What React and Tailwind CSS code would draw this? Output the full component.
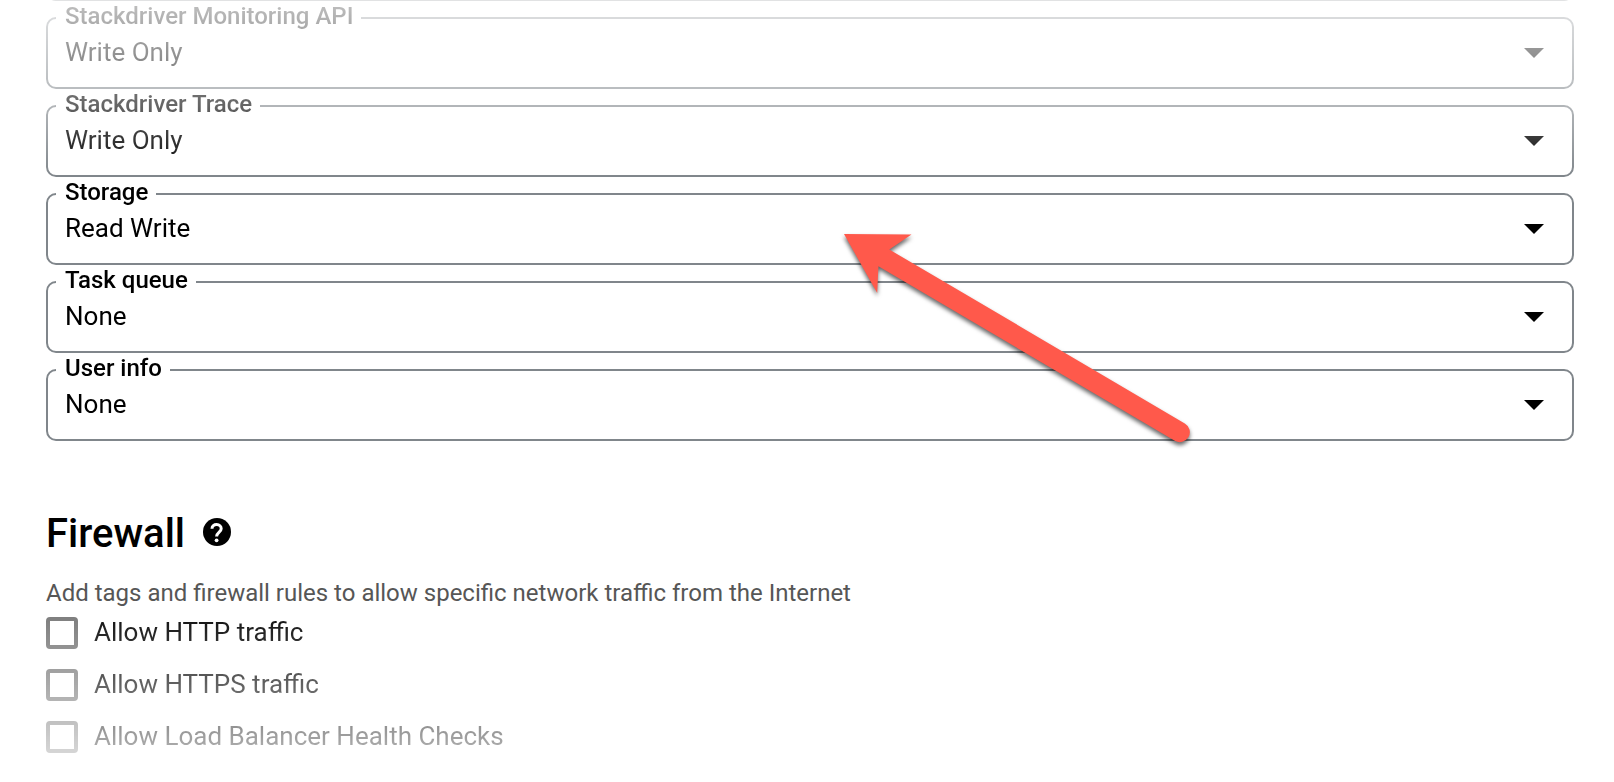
import React from "react";

const scopes = [
  { id: "monitoring", label: "Stackdriver Monitoring API", value: "Write Only" },
  { id: "trace", label: "Stackdriver Trace", value: "Write Only" },
  { id: "storage", label: "Storage", value: "Read Write" },
  { id: "task-queue", label: "Task queue", value: "None" },
  { id: "user-info", label: "User info", value: "None" },
];

const rules = [
  { id: "http", label: "Allow HTTP traffic" },
  { id: "https", label: "Allow HTTPS traffic" },
  { id: "health", label: "Allow Load Balancer Health Checks" },
];

function ScopeField({ id, label, value }) {
  return (
    <fieldset className="min-w-0 rounded-[10px] border-2 border-[#80868b]">
      <legend className="ml-2 h-6 pr-2 pl-[9px] text-[24px] leading-5 font-medium">
        <label htmlFor={id}>{label}</label>
      </legend>
      <div className="relative -mt-[11px] flex h-[68px] items-center">
        <select
          id={id}
          defaultValue={value}
          className="h-full w-full appearance-none bg-transparent px-[17px] pb-[2px] text-[26px] leading-8 text-black"
        >
          <option>{value}</option>
        </select>
        <svg
          aria-hidden="true"
          viewBox="0 0 20 10"
          className="pointer-events-none absolute right-7 h-[10px] w-5"
        >
          <path d="M0 0H20L10 10Z" fill="currentColor" />
        </svg>
      </div>
    </fieldset>
  );
}

function Arrow() {
  return (
    <svg
      aria-hidden="true"
      viewBox="834 224 370 230"
      className="pointer-events-none absolute top-[224px] left-[834px] h-[230px] w-[370px] drop-shadow-[0_3px_2px_rgba(0,0,0,0.6)]"
    >
      <path
        d="M844 234L911.5 234.6L889.3 249.5L1184.8 423.4A10 10 0 0 1 1174.8 440.8L878.4 266.2L877.2 293Z"
        fill="#ff594b"
      />
    </svg>
  );
}

function HelpIcon() {
  return (
    <svg viewBox="0 0 28 28" className="size-7" aria-hidden="true">
      <circle cx="14" cy="14" r="14" fill="black" />
      <path
        d="M9 10.8C9 8.2 11 6.6 13.7 6.6S18.2 8.3 18.2 10.7C18.2 14 13.6 14.2 13.6 18.6"
        fill="none"
        stroke="white"
        strokeWidth="3"
      />
      <circle cx="13.6" cy="22.3" r="1.9" fill="white" />
    </svg>
  );
}

export default function App() {
  return (
    <main className="relative min-h-screen overflow-hidden bg-white font-['Roboto',sans-serif] text-black">
      <section
        aria-label="Access scopes"
        className="flex flex-col gap-[5px] overflow-hidden pr-10 pl-[46px] [mask-image:linear-gradient(to_bottom,rgba(0,0,0,0.24),rgba(0,0,0,0.42)_52px,rgba(0,0,0,0.6)_105px,black_177px)]"
      >
        <div
          aria-hidden="true"
          className="-mt-[11px] h-3 rounded-b-[10px] border-2 border-t-0 border-[#80868b]"
        />
        {scopes.map((scope) => (
          <ScopeField key={scope.id} {...scope} />
        ))}
      </section>
      <Arrow />

      <section className="pt-[69px] pr-10 pl-[46px]">
        <div className="flex items-center gap-[18px]">
          <h2 className="text-[40px] leading-[48px] font-medium">Firewall</h2>
          <button type="button" aria-label="Help about firewall" className="pb-1">
            <HelpIcon />
          </button>
        </div>
        <p className="mt-[19px] text-[24px] leading-8 text-[#565656]">
          Add tags and firewall rules to allow specific network traffic from the Internet
        </p>
        <div className="mt-2 flex flex-col gap-5 [mask-image:linear-gradient(to_bottom,rgba(0,0,0,0.93),rgba(0,0,0,0.3))]">
          {rules.map((rule) => (
            <div key={rule.id} className="flex h-8 items-center gap-4">
              <input
                id={rule.id}
                type="checkbox"
                className="size-8 appearance-none rounded-[4px] border-4 border-[#757575] checked:bg-[#757575]"
              />
              <label htmlFor={rule.id} className="pb-[2px] text-[26px] leading-8">
                {rule.label}
              </label>
            </div>
          ))}
        </div>
      </section>
    </main>
  );
}
